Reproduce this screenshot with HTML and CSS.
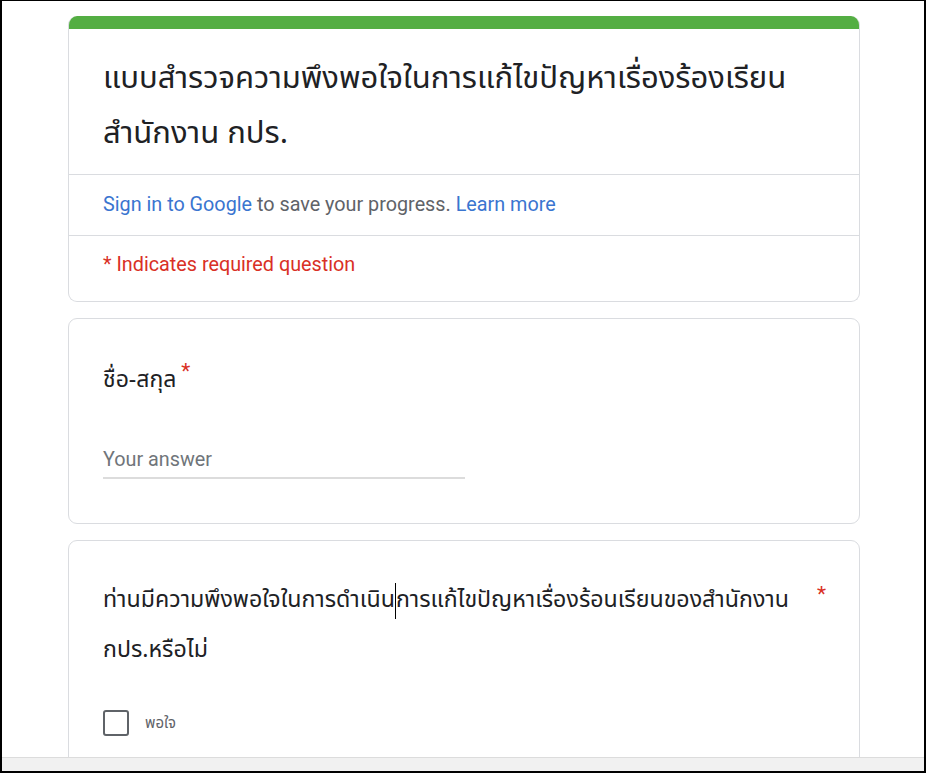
FILE: index.html
```html
<!DOCTYPE html>
<html lang="th">
<head>
<meta charset="utf-8">
<title>แบบสำรวจความพึงพอใจ</title>
<link rel="stylesheet" href="styles.css">
</head>
<body>
<div class="frame">
  <div class="viewport">
    <div class="form">
      <div class="card header-card">
        <div class="accent"></div>
        <div class="title-block">
          <h1 class="title">แบบสำรวจความพึงพอใจในการแก้ไขปัญหาเรื่องร้องเรียน สำนักงาน กปร.</h1>
        </div>
        <div class="signin">
          <a class="link" href="#">Sign in to Google</a> to save your progress. <a class="link" href="#">Learn more</a>
        </div>
        <div class="required-note">* Indicates required question</div>
      </div>

      <div class="card question-card q2">
        <div class="question">ชื่อ-สกุล<span class="star">*</span></div>
        <div class="answer">
          <span class="placeholder">Your answer</span>
        </div>
      </div>

      <div class="card question-card q3">
        <div class="q-row">
          <div class="question long">ท่านมีความพึงพอใจในการดำเนิน<span class="caret"></span>การแก้ไขปัญหาเรื่องร้อนเรียนของสำนักงาน กปร.หรือไม่</div>
          <span class="star side">*</span>
        </div>
        <label class="option">
          <span class="checkbox"></span>
          <span class="option-label">พอใจ</span>
        </label>
      </div>
    </div>
  </div>
  <div class="hscroll"></div>
</div>
</body>
</html>
```
FILE: styles.css
```css
* { box-sizing: border-box; }
html, body { margin: 0; padding: 0; background: #fff; }
body { font-family: Roboto, "Noto Sans Thai", "Noto Sans", sans-serif; }

.frame {
  width: 926px;
  height: 773px;
  border: 2px solid #000;
  border-top-width: 1px;
  display: flex;
  flex-direction: column;
  overflow: hidden;
  background: #fff;
}
.viewport {
  flex: 1;
  overflow: hidden;
  padding-top: 15px;
}
.hscroll {
  height: 14px;
  background: #f1f1f1;
  border-top: 1px solid #dcdcdc;
}

.form {
  width: 792px;
  margin: 0 0 0 66px;
  display: flex;
  flex-direction: column;
  gap: 16px;
}
.card {
  background: #fff;
  border: 1px solid #dadce0;
  border-radius: 9px;
}
.header-card { overflow: hidden; border-top: none; }
.accent { height: 13px; background: #54ae43; }

.title-block { padding: 22px 34px 13px; border-bottom: 1px solid #dadce0; }
.title {
  margin: 0;
  font-family: "Noto Sans Thai", "Noto Sans", sans-serif;
  font-weight: 400;
  font-size: 31px;
  line-height: 55px;
  color: #202124;
  max-width: 700px;
}

.signin {
  padding: 17px 34px 17px;
  font-size: 19.8px;
  line-height: 26px;
  color: #5f6368;
  border-bottom: 1px solid #dadce0;
}
.link { color: #3a75d0; text-decoration: none; }
.required-note {
  padding: 16px 34px 23px;
  font-size: 19.8px;
  line-height: 26px;
  color: #d93025;
}

.question-card { padding: 44px 34px 44px; }
.question {
  font-family: "Noto Sans Thai", "Noto Sans", sans-serif;
  font-size: 23px;
  line-height: 34px;
  color: #202124;
}
.star { color: #d93025; font-family: Roboto, sans-serif; font-size: 21px; vertical-align: top; position: relative; top: -9px; margin-left: 5px; }
.answer {
  margin-top: 50px;
  width: 362px;
  border-bottom: 2px solid #dcdcdc;
  padding-bottom: 4px;
}
.placeholder { font-size: 19.8px; line-height: 26px; color: #70757a; }

.q3 { padding-top: 34px; padding-bottom: 40px; }
.q-row { display: flex; justify-content: space-between; }
.long { max-width: 700px; line-height: 50px; font-size: 23.2px; }
.star.side { top: 4px; margin-right: -1px; line-height: 30px; }
.caret { display: inline-block; width: 1px; height: 36px; background: #000; vertical-align: middle; }

.option { display: flex; align-items: center; gap: 16px; margin-top: 35px; }
.checkbox {
  width: 26px; height: 26px;
  border: 2px solid #5f6368;
  border-radius: 3px;
}
.option-label {
  font-family: "Noto Sans Thai", "Noto Sans", sans-serif;
  font-size: 15px;
  color: #5f6368;
}
```
